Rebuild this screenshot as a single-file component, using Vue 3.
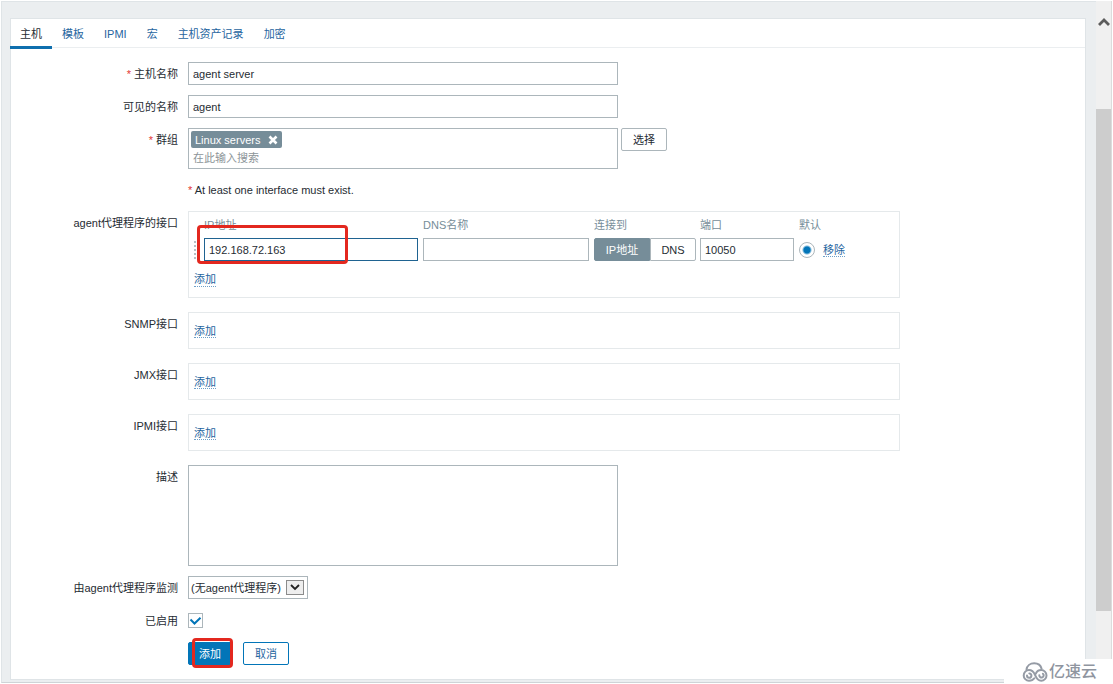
<script setup>
import { ref } from 'vue'

const tabs = ['主机', '模板', 'IPMI', '宏', '主机资产记录', '加密']
const activeTab = ref('主机')
const hostName = ref('agent server')
const visibleName = ref('agent')
const groupSearch = ref('')
const agent = ref({ ip: '192.168.72.163', dns: '', port: '10050', connect: 'IP地址' })
const extraInterfaces = ['SNMP接口', 'JMX接口', 'IPMI接口']
const description = ref('')
const proxy = ref('none')
const enabled = ref(true)
const defaultInterface = ref('agent')
</script>

<template>
  <div class="page">
    <div class="content">
      <main class="card">
        <nav class="tabs">
          <a
            v-for="tab in tabs"
            :key="tab"
            href="#"
            class="tab"
            :class="{ active: tab === activeTab }"
            @click.prevent="activeTab = tab"
          >{{ tab }}</a>
        </nav>

        <form class="form" @submit.prevent>
          <div class="row">
            <label class="label" for="host"><span class="star">*</span> 主机名称</label>
            <input id="host" v-model="hostName" class="input wide" type="text">
          </div>
          <div class="row">
            <label class="label" for="visible">可见的名称</label>
            <input id="visible" v-model="visibleName" class="input wide" type="text">
          </div>
          <div class="row">
            <label class="label" for="groups"><span class="star">*</span> 群组</label>
            <div class="groups">
              <div class="multiselect wide">
                <span class="chip">
                  Linux servers
                  <button type="button" class="chip-close" aria-label="Linux servers">
                    <svg viewBox="0 0 10 10" width="10" height="10"><path d="M1.5 1.5l7 7M8.5 1.5l-7 7" stroke="#fff" stroke-width="2.6" /></svg>
                  </button>
                </span>
                <input id="groups" v-model="groupSearch" class="search" type="text" placeholder="在此输入搜索">
              </div>
              <button type="button" class="btn plain">选择</button>
            </div>
          </div>
          <div class="row">
            <span></span>
            <p class="hint"><span class="star">*</span> At least one interface must exist.</p>
          </div>

          <div class="row spaced">
            <span class="label">agent代理程序的接口</span>
            <div class="box agent-box">
              <table class="interfaces">
                <thead>
                  <tr>
                    <th class="handle-col"></th>
                    <th class="ip-col">IP地址</th>
                    <th class="dns-col">DNS名称</th>
                    <th class="connect-col">连接到</th>
                    <th class="port-col">端口</th>
                    <th class="default-col">默认</th>
                    <th></th>
                  </tr>
                </thead>
                <tbody>
                  <tr>
                    <td><span class="handle"></span></td>
                    <td>
                      <div class="marked">
                        <input v-model="agent.ip" class="input focused" type="text" aria-label="IP地址">
                        <span class="mark mark-ip"></span>
                      </div>
                    </td>
                    <td><input v-model="agent.dns" class="input" type="text" aria-label="DNS名称"></td>
                    <td>
                      <div class="segmented">
                        <button
                          v-for="kind in ['IP地址', 'DNS']"
                          :key="kind"
                          type="button"
                          class="segment"
                          :class="{ on: agent.connect === kind }"
                          @click="agent.connect = kind"
                        >{{ kind }}</button>
                      </div>
                    </td>
                    <td><input v-model="agent.port" class="input" type="text" aria-label="端口"></td>
                    <td><input v-model="defaultInterface" class="radio" type="radio" value="agent" aria-label="默认"></td>
                    <td><a href="#" class="action" @click.prevent>移除</a></td>
                  </tr>
                </tbody>
              </table>
              <a href="#" class="action" @click.prevent>添加</a>
            </div>
          </div>

          <div v-for="name in extraInterfaces" :key="name" class="row spaced">
            <span class="label">{{ name }}</span>
            <div class="box small-box"><a href="#" class="action" @click.prevent>添加</a></div>
          </div>

          <div class="row">
            <label class="label" for="description">描述</label>
            <textarea id="description" v-model="description" class="textarea wide"></textarea>
          </div>
          <div class="row">
            <label class="label" for="proxy">由agent代理程序监测</label>
            <div class="select-wrap">
              <select id="proxy" v-model="proxy" class="select">
                <option value="none">(无agent代理程序)</option>
              </select>
              <span class="select-arrow">
                <svg viewBox="0 0 10 7" width="10" height="7"><path d="M1 1l4 4 4-4" fill="none" stroke="#222" stroke-width="1.8" /></svg>
              </span>
            </div>
          </div>
          <div class="row">
            <label class="label" for="enabled">已启用</label>
            <div class="check-line">
              <span class="check-wrap">
                <input id="enabled" v-model="enabled" class="check" type="checkbox">
                <svg v-if="enabled" class="tick" viewBox="0 0 15 15"><path d="M2.500 6.500L6.500 10.500L12.500 4.800" fill="none" stroke="#0275b8" stroke-width="2" /></svg>
              </span>
            </div>
          </div>
          <div class="row">
            <span></span>
            <div class="buttons">
              <div class="marked">
                <button type="submit" class="btn primary">添加</button>
                <span class="mark mark-add"></span>
              </div>
              <button type="button" class="btn outline">取消</button>
            </div>
          </div>
        </form>
      </main>
    </div>

    <div class="scrollbar">
      <svg class="scroll-up" viewBox="0 0 12 10" width="12" height="10"><path d="M1 8l5-5L11 8" fill="none" stroke="#5c5c5c" stroke-width="2.8" /></svg>
      <div class="thumb"></div>
    </div>

    <div class="brand">
      <svg viewBox="0 0 26 20" width="26" height="20" fill="none" stroke="#959ba5" stroke-width="2" stroke-linecap="round">
        <path d="M4.500 7.500C5 3.800 8.200 1.200 12.200 1.200c3.800 0 6.600 2.200 7.400 5.600" />
        <path d="M12.300 16.200C11.200 17.800 9.400 18.700 7 18.700A5.300 5.300 0 0 1 7 8.100c3 0 4.700 1.900 6 4.700 1.300 3.200 2.900 5.900 6.200 5.900a5.300 5.300 0 0 0 0-10.600c-2.600 0-4.600 1.500-5.400 3.600" />
        <path d="M5 13.600a2.200 2.200 0 1 0 2.300-2.200" />
        <path d="M17.300 13.200a2.200 2.200 0 1 0 3.600-1.500" />
      </svg>
      <span>亿速云</span>
    </div>
  </div>
</template>

<style>
body {
  margin: 0;
  background: #fff;
}
</style>

<style scoped>
* {
  box-sizing: border-box;
}
.page {
  position: relative;
  display: flex;
  min-height: 100vh;
  padding: 1px;
  font-family: "Liberation Sans", "Noto Sans CJK SC", sans-serif;
  font-size: 11px;
  line-height: 16px;
  color: #1f2c33;
}
input, button, select, textarea {
  font-family: inherit;
  font-size: inherit;
  line-height: inherit;
  color: inherit;
}
.content {
  flex: 1;
  min-width: 0;
  padding: 16px 10px 2px 8px;
  background: #ebeef0;
  border: 1px solid #dfe4e7;
  border-right: 0;
  border-bottom-color: #cfd4d7;
}
.card {
  height: 100%;
  background: #fff;
  border: 1px solid #dfe4e7;
}
.tabs {
  display: flex;
  height: 29px;
  margin-left: -1px;
  border-bottom: 1px solid #ebeef0;
}
.tab {
  height: 30px;
  padding: 0 10px;
  line-height: 30px;
  color: #1f65a0;
  text-decoration: none;
}
.tab.active {
  color: #1f2c33;
  border-bottom: 3px solid #0f6fae;
}
.form {
  display: flex;
  flex-direction: column;
  gap: 10px;
  padding: 14px 10px 14px 0;
}
.row {
  display: grid;
  grid-template-columns: 167px minmax(0, 1fr);
  column-gap: 10px;
}
.spaced {
  margin-bottom: 4px;
}
.label {
  height: 23px;
  line-height: 25px;
  text-align: right;
  white-space: nowrap;
}
.star {
  color: #e33734;
}
.wide {
  width: 100%;
  max-width: 430px;
}
.input {
  display: block;
  height: 23px;
  padding: 0 4px;
  background: #fff;
  border: 1px solid #acb6bb;
  border-radius: 0;
  outline: 0;
}
.input.focused {
  border-color: #1f6391;
}
.groups {
  display: flex;
  align-items: flex-start;
  gap: 3px;
}
.multiselect {
  height: 41px;
  padding: 2px;
  border: 1px solid #acb6bb;
}
.chip {
  display: flex;
  align-items: center;
  gap: 8px;
  width: max-content;
  height: 17px;
  padding: 0 4px;
  color: #fff;
  background: #768d99;
  border-radius: 2px;
}
.chip-close {
  display: flex;
  padding: 0;
  background: none;
  border: 0;
}
.search {
  display: block;
  width: 100%;
  height: 19px;
  padding: 0 2px;
  background: none;
  border: 0;
  outline: 0;
}
.search::placeholder {
  color: #8d9599;
  opacity: 1;
}
.hint {
  margin: 0;
  line-height: 22px;
}
.btn {
  display: block;
  height: 23px;
  padding: 0;
  white-space: nowrap;
  background: #fff;
  border: 1px solid #acb6bb;
  border-radius: 2px;
}
.btn.plain,
.btn.outline {
  width: 46px;
}
.btn.outline {
  color: #1f65a0;
  border-color: #0275b8;
}
.btn.primary {
  width: 44px;
  color: #fff;
  background: #0275b8;
  border-color: #0275b8;
}
.box {
  width: 100%;
  max-width: 712px;
  border: 1px solid #e5e9eb;
}
.small-box {
  height: 37px;
  padding: 10px 5px;
}
.agent-box {
  height: 87px;
  padding: 5px 4px;
}
.agent-box > .action {
  display: inline-block;
  height: 16px;
  margin: 10px 0 0 1px;
}
.interfaces {
  border-collapse: collapse;
  table-layout: fixed;
  width: 100%;
}
.interfaces th {
  height: 21px;
  padding: 0 0 5px;
  font-weight: 400;
  line-height: 16px;
  color: #768d99;
  text-align: left;
}
.interfaces td {
  padding: 0;
}
.interfaces .input {
  width: calc(100% - 5px);
}
.handle-col { width: 11px; }
.ip-col { width: 219px; }
.dns-col { width: 171px; }
.connect-col { width: 106px; }
.port-col { width: 99px; }
.default-col { width: 24px; white-space: nowrap; }
.handle {
  display: block;
  width: 3px;
  height: 18px;
  border-right: 2px dotted #b6bfc4;
}
.segmented {
  display: flex;
}
.segment {
  height: 23px;
  width: 46px;
  padding: 0;
  background: #fff;
  border: 1px solid #acb6bb;
  border-radius: 0 2px 2px 0;
}
.segment:first-child {
  width: 56px;
  border-radius: 2px 0 0 2px;
}
.segment.on {
  color: #fff;
  background: #768d99;
  border-color: #768d99;
}
.radio {
  display: block;
  width: 16px;
  height: 16px;
  margin: 0;
  appearance: none;
  background: radial-gradient(circle, #0275b8 0 3px, #fff 5px);
  border: 1px solid #acb6bb;
  border-radius: 50%;
}
.action {
  color: #1f65a0;
  text-decoration: none;
  border-bottom: 1px dotted #6d9fc8;
}
.textarea {
  display: block;
  height: 101px;
  border: 1px solid #acb6bb;
  outline: 0;
  resize: none;
}
.select-wrap {
  position: relative;
  width: 120px;
}
.select {
  display: block;
  width: 100%;
  height: 23px;
  padding: 0 22px 0 2px;
  appearance: none;
  background: #fff;
  border: 1px solid #acb6bb;
  border-radius: 0;
}
.select-arrow {
  position: absolute;
  top: 4px;
  right: 4px;
  display: flex;
  align-items: center;
  justify-content: center;
  width: 18px;
  height: 15px;
  pointer-events: none;
  background: #eee;
  border: 1px solid #8b8b8b;
}
.check-line {
  display: flex;
  align-items: center;
  height: 23px;
}
.check-wrap {
  position: relative;
  width: 15px;
  height: 15px;
}
.check {
  display: block;
  width: 15px;
  height: 15px;
  margin: 0;
  appearance: none;
  background: #fff;
  border: 1px solid #acb6bb;
}
.tick {
  position: absolute;
  inset: 0;
  pointer-events: none;
}
.buttons {
  display: flex;
  gap: 11px;
}
.marked {
  position: relative;
}
.mark {
  position: absolute;
  pointer-events: none;
  border: 3px solid #e3281f;
  border-radius: 4px;
}
.mark-ip {
  top: -13px;
  left: -7px;
  width: 151px;
  height: 39px;
}
.mark-add {
  top: -4px;
  left: 4px;
  width: 41px;
  height: 30px;
}
.scrollbar {
  display: flex;
  flex-direction: column;
  align-items: center;
  width: 16px;
  padding-top: 16px;
  background: #f0f0f0;
  border-right: 1px solid #dcdcdc;
}
.thumb {
  width: 100%;
  height: 502px;
  margin-top: 82px;
  background: #cdcdcd;
}
.brand {
  position: absolute;
  right: 0;
  bottom: 0;
  display: flex;
  align-items: center;
  gap: 1px;
  width: 109px;
  height: 25px;
  padding-left: 18px;
  font-size: 16px;
  font-weight: 500;
  color: #8f959f;
  background: #fff;
}
</style>
